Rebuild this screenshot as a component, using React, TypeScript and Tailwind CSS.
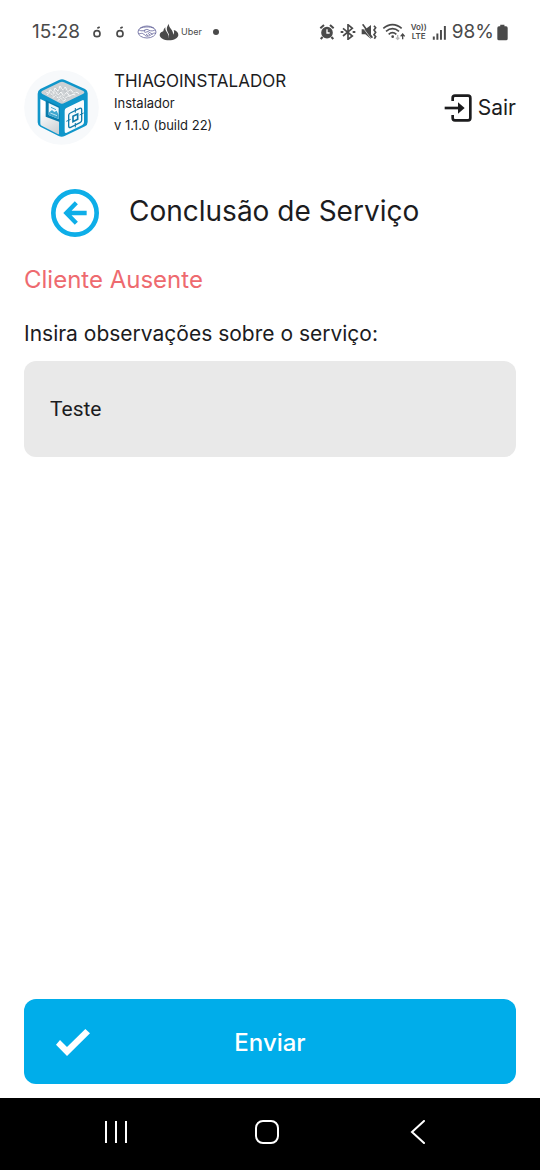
import React, { useState } from "react";

function StatusBar() {
    return (
        <div className="flex h-16 items-center justify-between px-8 text-[#4a4a4a]">
            <div className="flex items-center gap-[11px]">
                <span className="text-[19px] leading-6">15:28</span>
                <DotIcon />
                <DotIcon />
                <div className="flex items-center gap-[2px]">
                    <HandshakeIcon />
                    <FlameIcon />
                    <span className="text-[9px] leading-4">Uber</span>
                </div>
                <span className="size-[6px] rounded-full bg-[#4a4a4a]" />
            </div>
            <div className="flex items-center gap-[5px]">
                <AlarmIcon />
                <BluetoothIcon />
                <MuteIcon />
                <WifiIcon />
                <div className="flex flex-col items-center text-[8px] font-semibold leading-[9px]">
                    <span>Vo))</span>
                    <span>LTE</span>
                </div>
                <SignalIcon />
                <div className="flex items-center gap-[3px]">
                    <span className="text-[19px] leading-6">98%</span>
                    <BatteryIcon />
                </div>
            </div>
        </div>
    );
}

function DotIcon() {
    return (
        <svg viewBox="0 0 36 42" className="h-[14px] w-3" fill="none" aria-hidden="true">
            <circle cx="18" cy="26" r="9" stroke="currentColor" strokeWidth="5" />
            <path d="M19 10l7-4" stroke="currentColor" strokeWidth="5" />
        </svg>
    );
}

function HandshakeIcon() {
    return (
        <svg viewBox="0 0 60 42" className="h-[14px] w-5" fill="none" stroke="#67689c" strokeWidth="2.5" aria-hidden="true">
            <ellipse cx="30" cy="21" rx="27" ry="18" />
            <path d="M5 14c7 5 13 4 19 1 5-3 8-2 12 1 7 3 13 2 19-2" />
            <path d="M5 27c7-2 11-3 15 0 4 5 9 8 14 6 5 0 8-4 13-7 3-2 6-2 9-1" />
            <path d="M24 15c-3 4-3 7 1 7s5-4 9-2l13 8M32 24l7 6M27 27l6 5M9 10c12-5 29-6 42 0" />
        </svg>
    );
}

function FlameIcon() {
    return (
        <svg viewBox="0 0 60 54" className="h-[18px] w-5" fill="currentColor" aria-hidden="true">
            <path d="M30 2c-1 7 2 10 6 16 5 7 7 11 6 17 4-4 4-9 2-14 10 3 14 8 14 15 0 9-13 16-28 16S2 45 2 36c0-7 6-11 15-13 0 6 4 9 8 14 2 3 3 5 3 7 4-6 2-11-2-17-4-8-4-16 4-25z" />
            <path d="M19 13c-1 8 2 11 6 17 3 5 5 8 4 13l-8-2c-5-5-8-9-8-15 0-5 2-9 6-13z" />
        </svg>
    );
}

function AlarmIcon() {
    return (
        <svg viewBox="50 44 48 48" className="size-4" fill="none" stroke="currentColor" aria-hidden="true">
            <circle cx="74" cy="70" r="15" fill="currentColor" strokeWidth="5" />
            <path d="M54 57l11-10M94 57L83 47M61 83l-6 6M87 83l6 6" strokeWidth="6" />
            <path d="M74 60v11h8" stroke="white" strokeWidth="4" />
        </svg>
    );
}

function BluetoothIcon() {
    return (
        <svg viewBox="117 43 48 48" className="size-4" fill="none" stroke="currentColor" strokeWidth="5" aria-hidden="true">
            <path d="M126 56l28 23-13 10V45l13 11-28 23" />
            <path d="M119 67h8M155 67h8" strokeWidth="6" />
        </svg>
    );
}

function MuteIcon() {
    return (
        <svg viewBox="182 43 48 48" className="size-4" fill="currentColor" aria-hidden="true">
            <path d="M184 59h11l17-13v42l-17-14h-11z" />
            <path d="M184 49l30 40" stroke="white" strokeWidth="2" />
            <path d="M187 44l29 40" stroke="currentColor" strokeWidth="5" />
            <path d="M221 48l5 6-5 7 5 7-5 7 5 6-4 6" fill="none" stroke="currentColor" strokeWidth="5" />
        </svg>
    );
}

function WifiIcon() {
    return (
        <svg viewBox="246 40 70 54" className="h-[18px] w-6" fill="none" stroke="currentColor" strokeWidth="5" aria-hidden="true">
            <path d="M249 56c17-15 38-15 55 0M257 65c12-10 27-10 39 0M265 74c7-6 16-6 23 0" />
            <circle cx="277" cy="81" r="4" fill="currentColor" stroke="none" />
            <path d="M307 89V76M301 80l6-7 6 7" strokeWidth="4" />
            <path d="M292 76v12M287 84l5 5 5-5" stroke="#b8b8b8" strokeWidth="4" />
        </svg>
    );
}

function SignalIcon() {
    return (
        <svg viewBox="392 43 45 46" className="size-[15px]" fill="currentColor" aria-hidden="true">
            <path d="M394 78h6v10h-6zM405 69h6v19h-6zM416 58h6v30h-6zM428 46h6v42h-6z" />
        </svg>
    );
}

function BatteryIcon() {
    return (
        <svg viewBox="592 42 34 50" className="h-[17px] w-[11px]" fill="currentColor" aria-hidden="true">
            <path d="M602 43h13v5h5q5 0 5 5v33q0 5-5 5h-22q-5 0-5-5V53q0-5 5-5h4z" />
        </svg>
    );
}

function Logo() {
    return (
        <svg viewBox="27 29 225 225" className="size-[75px] shrink-0" fill="none" role="img" aria-label="Logo">
            <defs>
                <linearGradient id="panel" x1="85" y1="150" x2="130" y2="220" gradientUnits="userSpaceOnUse">
                    <stop stopColor="#ffffff" />
                    <stop offset="1" stopColor="#c9ced2" />
                </linearGradient>
            </defs>
            <circle cx="139.500" cy="141.500" r="112" fill="#f7f9fb" />
            <path d="M132 59q9-4 18 0l60 27q8 4 8 13v86q0 9-8 13l-61 29q-9 4-18 0l-55-28q-8-4-8-13v-86q0-9 8-14z" fill="#1096ca" />
            <path d="M135 66q6-3 12 0l58 26q6 4 0 8l-57 28q-7 4-14 0l-53-28q-5-4 0-8z" fill="#cdd1d4" />
            <path
                d="M92 94l8 4 6-10 9 9 5-14 9 9 6-15 8 12 8-9 7 13 10-5 7 10 11-2 6 4M96 103l9-6 8 8 8-12 8 11 9-9 8 12 9-11 9 11 10-5 7 2M113 112l9-7 8 9 9-9 9 10 11-8 8 2M128 121l9-7 9 8 7-5"
                stroke="#f8f9f9"
                strokeWidth="3"
            />
            <path
                d="M90 97l7-5 7 10 9-12 7 8 9-15 6 12 9-14 7 14 9-7 8 13 11-7 7 8M107 107l9-5 8 8 9-14 9 13 9-7 8 10 10-5M124 118l8-5 9 7 9-8 6 4"
                stroke="#a6acaf"
                strokeWidth="1"
            />
            <path d="M76 116l56 27v77q0 3-4 1l-48-25q-4-2-4-6z" fill="url(#panel)" />
            <path d="M92 119l42 20v46l-42-16z" fill="#087cac" />
            <path d="M101 128l30 14v34l-30-12z" fill="#eef7fb" />
            <path d="M101 157l10-8 7 6 7-4 6 13v12l-30-12z" fill="#3fa7cf" />
            <path d="M108 141l15 7" stroke="#52afd2" strokeWidth="3" />
            <path d="M106 158l20 8" stroke="#ffffff" strokeWidth="2" />
            <path d="M154 143l48-23q5-3 5 4v62q0 5-5 8l-47 23q-6 3-6-4v-62q0-6 5-8z" fill="#fafcfd" />
            <g stroke="#107aa9">
                <path d="M166 158l28-14q6-2 6 4v32q0 5-5 7l-28 14q-6 2-6-4v-32q0-5 5-7z" strokeWidth="4" />
                <path d="M174 168l14-7v16l-14 7z" strokeWidth="5" />
                <path d="M181 143v14M181 188v13M154 183l13-6M194 164l12-6" strokeWidth="3" />
            </g>
        </svg>
    );
}

function ExitIcon() {
    return (
        <svg viewBox="73 42 84 84" className="size-7" fill="none" stroke="currentColor" strokeWidth="8" aria-hidden="true">
            <path d="M99 63V54q0-7 7-7h39q7 0 7 7v60q0 7-7 7h-39q-7 0-7-7v-9" />
            <path d="M75 84h48" />
            <path d="M115 67l20 17-20 17z" fill="currentColor" stroke="none" />
        </svg>
    );
}

function BackIcon() {
    return (
        <svg viewBox="33 42 144 144" className="size-12" fill="none" stroke="currentColor" aria-hidden="true">
            <circle cx="105" cy="114" r="65" strokeWidth="14" />
            <path d="M140 114H81M109 83l-30 31 30 31" strokeWidth="13" />
        </svg>
    );
}

function CheckIcon() {
    return (
        <svg viewBox="135 127 108 87" className="h-[29px] w-9" fill="currentColor" aria-hidden="true">
            <path d="M150 163l21 21 55-54 14 13-69 68-33-34z" />
        </svg>
    );
}

function NavBar() {
    return (
        <nav className="grid h-[72px] grid-cols-3 bg-black pb-1 pl-10 pr-[46px] text-white">
            <button type="button" aria-label="Recentes" className="flex items-center justify-center">
                <svg viewBox="0 0 24 24" className="size-6" stroke="currentColor" strokeWidth="2">
                    <path d="M2 1v22M12 1v22M22 1v22" />
                </svg>
            </button>
            <button type="button" aria-label="Início" className="flex items-center justify-center">
                <svg viewBox="0 0 24 24" className="size-6" fill="none" stroke="currentColor" strokeWidth="2">
                    <rect x="1" y="1" width="22" height="22" rx="7" />
                </svg>
            </button>
            <button type="button" aria-label="Voltar" className="flex items-center justify-center">
                <svg viewBox="0 0 24 24" className="size-6" fill="none" stroke="currentColor" strokeWidth="2">
                    <path d="M18 1L6 12l12 11" strokeLinecap="round" />
                </svg>
            </button>
        </nav>
    );
}

export default function App() {
    const [notes, setNotes] = useState("Teste");

    return (
        <div className="flex min-h-screen flex-col bg-white font-['Inter',sans-serif] text-[#1c1c1e]">
            <StatusBar />

            <header className="flex items-center justify-between px-6 pt-[6px]">
                <div className="flex items-start gap-[15px]">
                    <Logo />
                    <div>
                        <div className="text-[17px] leading-[22px]">THIAGOINSTALADOR</div>
                        <div className="text-[13px] leading-[22px]">Instalador</div>
                        <div className="text-[13px] leading-[22px]">v 1.1.0 (build 22)</div>
                    </div>
                </div>
                <button type="button" className="flex items-center gap-[6px] text-[21px] leading-7">
                    <ExitIcon />
                    Sair
                </button>
            </header>

            <main className="flex flex-1 flex-col px-6 pb-[14px] pt-11">
                <div className="flex items-center gap-[30px] pl-[27px]">
                    <button type="button" aria-label="Voltar" className="text-[#0eaee8]">
                        <BackIcon />
                    </button>
                    <h1 className="pb-1 text-[28px] leading-9">Conclusão de Serviço</h1>
                </div>

                <h2 className="mt-[27px] text-[24px] leading-8 text-[#ee6a6f]">Cliente Ausente</h2>

                <form className="flex flex-1 flex-col" onSubmit={(e) => e.preventDefault()}>
                    <label htmlFor="notes" className="mt-6 text-[21px] leading-7">
                        Insira observações sobre o serviço:
                    </label>
                    <input
                        id="notes"
                        value={notes}
                        onChange={(e) => setNotes(e.target.value)}
                        className="mt-[13px] h-24 w-full rounded-xl bg-[#e9e9e9] px-[26px] font-['Roboto',sans-serif] text-[21px] outline-none"
                    />
                    <button
                        type="submit"
                        className="relative mt-auto flex h-[85px] w-full items-center justify-center rounded-xl bg-[#00adea] pt-[2px] text-[24px] font-medium text-white"
                    >
                        <span className="absolute left-[31px]">
                            <CheckIcon />
                        </span>
                        Enviar
                    </button>
                </form>
            </main>

            <NavBar />
        </div>
    );
}
